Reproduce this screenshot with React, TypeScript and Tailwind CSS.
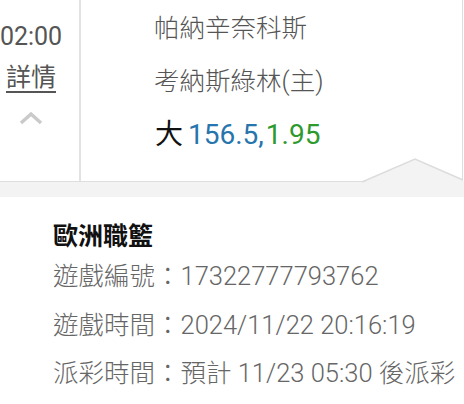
import React from "react";

const font = { fontFamily: 'Roboto, "Noto Sans CJK TC", sans-serif' };

export default function App() {
  return (
    <div className="w-[464px] h-[404px] bg-white overflow-hidden" style={font}>
      <div className="relative">
        <div className="flex h-[182px] w-[463px] border-b border-r border-[#dedede] bg-white">
          <div className="w-[81px] shrink-0 border-r-2 border-[#e2e2e2] flex flex-col items-start">
            <div className="w-[62px] flex flex-col items-center">
              <div className="mt-[22px] text-[25px] leading-[30px] text-[#555]">02:00</div>
              <div className="mt-[11px] text-[25px] leading-[30px] text-[#555] underline underline-offset-[5px] decoration-[1.5px]">詳情</div>
              <svg className="mt-[18px]" width="24" height="14" viewBox="0 0 24 14">
                <path d="M2 12 L12 3 L22 12" fill="none" stroke="#cacaca" strokeWidth="3.5" />
              </svg>
            </div>
          </div>
          <div className="flex flex-col pl-[73px] pt-[12px]">
            <div className="text-[25.5px] leading-[32px] text-[#555] font-light">帕納辛奈科斯</div>
            <div className="mt-[21px] text-[25.5px] leading-[32px] text-[#555] font-light">考納斯綠林(主)</div>
            <div className="mt-[21px] text-[28px] leading-[34px] ml-[1px] whitespace-nowrap">
              <span className="text-[#111]">大</span>
              <span className="text-[#2775ad] ml-[5px]">156.5,</span>
              <span className="text-[#2e9a2e] ml-[2px]">1.95</span>
            </div>
          </div>
        </div>
        <svg className="absolute left-0 top-0" width="464" height="200" viewBox="0 0 464 200">
          <polygon points="362,183 415,159 464,181 464,183" fill="#f3f3f3" />
          <polyline points="362,182 415,159 463,180" fill="none" stroke="#dcdcdc" strokeWidth="1.5" />
        </svg>
      </div>
      <div className="h-[15px] bg-[#f3f3f3]" />
      <div className="pl-[53px] pt-[22px] flex flex-col">
        <div className="text-[25px] leading-[36px] font-bold text-[#111]">歐洲職籃</div>
        <div className="mt-[3px] text-[25.5px] leading-[36px] text-[#666] font-light whitespace-nowrap">遊戲編號：17322777793762</div>
        <div className="mt-[13px] text-[25.5px] leading-[36px] text-[#666] font-light whitespace-nowrap">遊戲時間：2024/11/22 20:16:19</div>
        <div className="mt-[12px] text-[25.5px] leading-[36px] text-[#666] font-light whitespace-nowrap">派彩時間：預計 11/23 05:30 後派彩</div>
      </div>
    </div>
  );
}
